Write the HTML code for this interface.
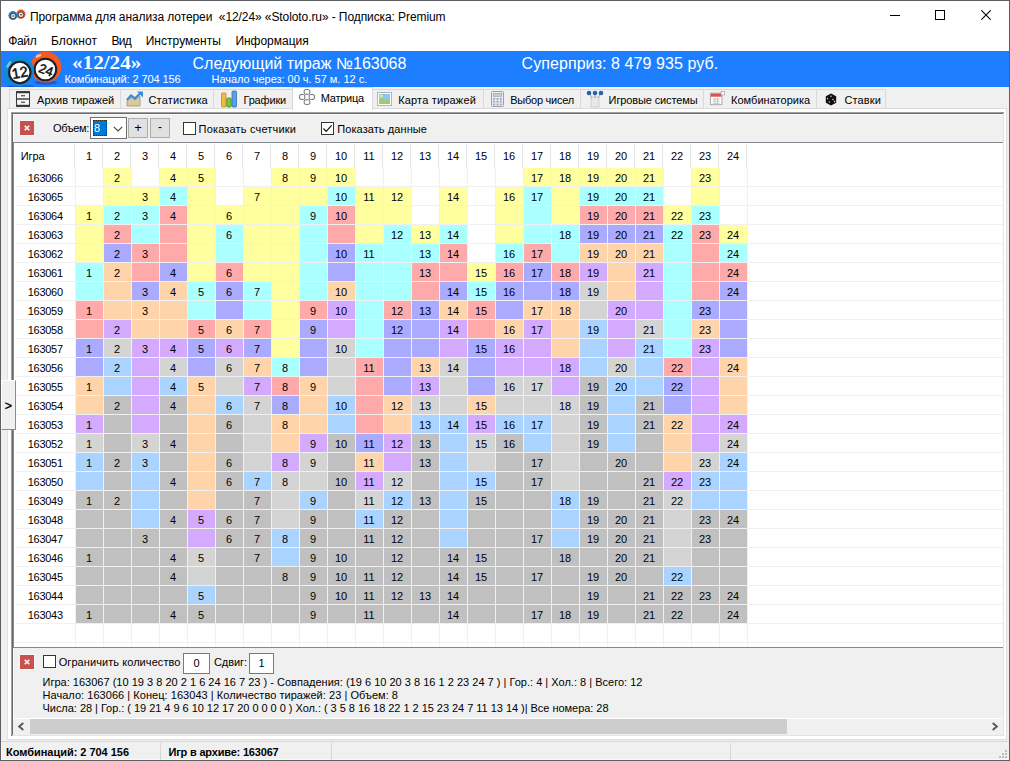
<!DOCTYPE html>
<html><head><meta charset="utf-8"><title>12/24</title>
<style>
html,body{margin:0;padding:0;}
body{width:1010px;height:761px;overflow:hidden;background:#f0f0f0;position:relative;font-family:"Liberation Sans",sans-serif;font-size:11px;color:#000;}
.a{position:absolute;}
.t{position:absolute;white-space:nowrap;line-height:14px;}
.c{position:absolute;width:27px;height:18px;text-align:center;line-height:21px;font-size:11px;overflow:hidden;box-sizing:border-box;padding-right:1px;}
.g{position:absolute;width:60px;height:18px;line-height:21px;font-size:11px;text-align:left;letter-spacing:-0.3px;overflow:hidden;}
.h{position:absolute;text-align:center;width:28px;line-height:14px;font-size:11px;}
.tab{position:absolute;top:89px;height:20px;border:1px solid #d9d9d9;border-bottom:none;background:#f0f0f0;box-sizing:border-box;}
.tt{position:absolute;top:93px;white-space:nowrap;line-height:14px;font-size:12px;}
.m{position:absolute;top:34px;white-space:nowrap;line-height:15px;font-size:12.5px;}
.w{color:#fff;}
</style></head><body>

<div class="a" style="left:0;top:0;width:1010px;height:1px;background:#5c6062"></div>
<div class="a" style="left:0;top:0;width:1px;height:761px;background:#5c6062"></div>
<div class="a" style="left:1009px;top:0;width:1px;height:761px;background:#5c6062"></div>
<div class="a" style="left:0;top:760px;width:1010px;height:1px;background:#5c6062"></div>
<div class="a" style="left:1px;top:1px;width:1008px;height:30px;background:#fff"></div>
<svg class="a" style="left:8px;top:8px" width="18" height="14" viewBox="0 0 18 14"><circle cx="12.9" cy="6.2" r="4.6" fill="#e8522a"/><circle cx="13" cy="6.7" r="2.9" fill="#e4e4e4" stroke="#333" stroke-width="0.9"/><circle cx="4.9" cy="7.6" r="4.5" fill="#1f83cf"/><circle cx="5.2" cy="8" r="2.8" fill="#e4e4e4" stroke="#333" stroke-width="0.9"/><path d="M4 8H6.4M12 6.7H14.2" stroke="#555" stroke-width="1.2"/></svg>
<div class="t" id="title" style="left:30px;top:9.5px;font-size:12px;letter-spacing:-0.088px;line-height:15px;">Программа для анализа лотереи&nbsp; «12/24» «Stoloto.ru» - Подписка: Premium</div>
<div class="a" style="left:890px;top:15px;width:10px;height:1px;background:#000"></div>
<div class="a" style="left:935px;top:10px;width:9px;height:9px;border:1px solid #000;box-sizing:content-box;width:8px;height:8px"></div>
<svg class="a" style="left:981px;top:10px" width="10" height="10" viewBox="0 0 10 10"><path d="M0.3 0.3L9.7 9.7M9.7 0.3L0.3 9.7" stroke="#000" stroke-width="1.1" fill="none"/></svg>
<div class="a" style="left:1px;top:31px;width:1008px;height:20px;background:#fff"></div>
<div class="t" id="menu0" style="left:8.2px;top:33.8px;font-size:12px;letter-spacing:-0.329px;line-height:15px;">Файл</div>
<div class="t" id="menu1" style="left:51px;top:33.8px;font-size:12px;letter-spacing:0.094px;line-height:15px;">Блокнот</div>
<div class="t" id="menu2" style="left:111.6px;top:33.8px;font-size:12px;letter-spacing:-0.773px;line-height:15px;">Вид</div>
<div class="t" id="menu3" style="left:145.7px;top:33.8px;font-size:12px;letter-spacing:0.034px;line-height:15px;">Инструменты</div>
<div class="t" id="menu4" style="left:235.4px;top:33.8px;font-size:12px;letter-spacing:-0.018px;line-height:15px;">Информация</div>
<div class="a" style="left:1px;top:51px;width:1008px;height:36px;background:#1d7fff"></div>
<svg class="a" style="left:1px;top:51px" width="70" height="36" viewBox="1 51 70 36">
<ellipse cx="46" cy="82.5" rx="11.5" ry="2.2" fill="#1a5cd6"/>
<ellipse cx="20.5" cy="86.5" rx="13.5" ry="1.8" fill="#1a5cd6"/>
<circle cx="45.9" cy="67" r="15.4" fill="#f55a23"/>
<ellipse cx="38.5" cy="55.8" rx="3.2" ry="1.3" fill="#fbb9a0" transform="rotate(-25 38.5 55.8)"/>
<circle cx="45.4" cy="69.5" r="10.8" fill="#fff" stroke="#231f20" stroke-width="2.1"/>
<text x="46" y="74.6" font-family="Liberation Sans" font-size="13" text-anchor="middle" fill="#111" stroke="#111" stroke-width="0.5" transform="rotate(20 46 70)">24</text>
<circle cx="18.7" cy="71.3" r="15.3" fill="#0e8ad8"/>
<ellipse cx="8.7" cy="64.6" rx="4" ry="1.3" fill="#7cc4ee" transform="rotate(-58 8.7 64.6)"/>
<circle cx="19.8" cy="72.5" r="10.7" fill="#fff" stroke="#231f20" stroke-width="2.1"/>
<text x="19.8" y="77.6" font-family="Liberation Sans" font-size="14.5" text-anchor="middle" fill="#111" stroke="#111" stroke-width="0.5" transform="rotate(-10 20 72.5)">12</text>
</svg>
<div class="t w" id="big" style="left:72px;top:51.5px;font-size:18px;transform:scaleX(1.1743);transform-origin:0 0;line-height:22px;font-weight:bold;font-family:'Liberation Serif',serif;">«12/24»</div>
<div class="t w" id="comb" style="left:64.5px;top:72px;font-size:11px;letter-spacing:-0.107px;">Комбинаций: 2 704 156</div>
<div class="t w" id="next" style="left:192.5px;top:54px;font-size:16px;letter-spacing:-0.006px;line-height:20px;">Следующий тираж №163068</div>
<div class="t w" id="start" style="left:211.5px;top:72px;font-size:11px;letter-spacing:-0.021px;">Начало через: 00 ч. 57 м. 12 с.</div>
<div class="t w" id="super" style="left:521.5px;top:54px;font-size:16px;letter-spacing:0.077px;line-height:20px;">Суперприз: 8 479 935 руб.</div>
<div class="tab" style="left:9px;width:112px"></div>
<div class="t" id="tab_arch" style="left:37.1px;top:93px;font-size:11px;letter-spacing:0.021px;">Архив тиражей</div>
<div class="tab" style="left:120px;width:94px"></div>
<div class="t" id="tab_stat" style="left:148.5px;top:93px;font-size:11px;letter-spacing:0.162px;">Статистика</div>
<div class="tab" style="left:213px;width:80px"></div>
<div class="t" id="tab_graf" style="left:243.5px;top:93px;font-size:11px;letter-spacing:-0.176px;">Графики</div>
<div class="tab" style="left:372px;width:112px"></div>
<div class="t" id="tab_map" style="left:398.2px;top:93px;font-size:11px;letter-spacing:0.175px;">Карта тиражей</div>
<div class="tab" style="left:483px;width:98px"></div>
<div class="t" id="tab_calc" style="left:510.2px;top:93px;font-size:11px;letter-spacing:-0.236px;">Выбор чисел</div>
<div class="tab" style="left:580px;width:124px"></div>
<div class="t" id="tab_sys" style="left:608.6px;top:93px;font-size:11px;letter-spacing:-0.122px;">Игровые системы</div>
<div class="tab" style="left:703px;width:114px"></div>
<div class="t" id="tab_comb" style="left:731px;top:93px;font-size:11px;letter-spacing:0.029px;">Комбинаторика</div>
<div class="tab" style="left:816px;width:70px"></div>
<div class="t" id="tab_dice" style="left:844.5px;top:93px;font-size:11px;letter-spacing:0.120px;">Ставки</div>
<div class="a" style="left:7px;top:108px;width:1000px;height:632px;background:#fff;border:1px solid #dcdcdc;border-top-color:#dcdcdc;border-left-color:#e2e2e2;box-sizing:border-box"></div>
<div class="a" style="left:292px;top:87px;width:81px;height:23px;background:#fff;border:1px solid #d9d9d9;border-bottom:none;box-sizing:border-box"></div>
<div class="t" id="tab_matrix" style="left:320.7px;top:91px;font-size:11px;letter-spacing:-0.227px;">Матрица</div>
<svg class="a" style="left:16px;top:91px" width="14" height="16" viewBox="0 0 14 16"><rect x="0.5" y="1" width="13" height="14" fill="#f4f4f4" stroke="#3a3a3a" stroke-width="1"/><rect x="0" y="0" width="14" height="2.2" rx="0.8" fill="#3a3a3a"/><rect x="0" y="13.8" width="14" height="2.2" fill="#3a3a3a"/><rect x="0" y="7.3" width="14" height="1.4" fill="#3a3a3a"/><rect x="5" y="4.2" width="4" height="1.1" fill="#3a3a3a"/><rect x="5" y="10.7" width="4" height="1.1" fill="#3a3a3a"/></svg>
<svg class="a" style="left:126px;top:90px" width="18" height="18" viewBox="0 0 18 18"><path d="M1 16V11L5 7L9 10L14 6V16Z" fill="#d9c8a0" stroke="#a89468" stroke-width="0.8"/><path d="M1 10L5 5.5L9 8.5L14 3.5" stroke="#3b8fd8" stroke-width="2.4" fill="none"/><path d="M11 1.5H17V7.5Z" fill="#3b8fd8"/></svg>
<svg class="a" style="left:220px;top:90px" width="18" height="18" viewBox="0 0 18 18"><rect x="1.5" y="3" width="4.5" height="14" rx="1" fill="#f4b942" stroke="#c88a1a" stroke-width="0.8"/><rect x="6.7" y="8" width="4.5" height="9" rx="1" fill="#7cc242" stroke="#4a8e1c" stroke-width="0.8"/><rect x="12" y="1" width="4.5" height="16" rx="1" fill="#5aa2e6" stroke="#2c6db8" stroke-width="0.8"/></svg>
<svg class="a" style="left:299px;top:89px" width="16" height="16" viewBox="0 0 16 16" fill="#fff" stroke="#5a5a5a" stroke-width="0.9"><rect x="5.2" y="0.6" width="5.6" height="4.6" rx="1.3"/><rect x="0.6" y="5.6" width="5.2" height="4.8" rx="1.3"/><rect x="10.2" y="5.6" width="5.2" height="4.8" rx="1.3"/><rect x="5.2" y="10.8" width="5.6" height="4.6" rx="1.3"/></svg>
<svg class="a" style="left:377px;top:91.5px" width="15" height="14" viewBox="0 0 15 14"><rect x="0.5" y="0.5" width="14" height="13" fill="#fff" stroke="#b4b4b4"/><rect x="2" y="2" width="11" height="10" fill="#8ec5ea"/><path d="M2 8L5.5 6.3L9 8.6L13 6.8V12H2Z" fill="#9ccc6a"/><rect x="2.8" y="2.8" width="2.8" height="2.6" fill="#efe58e"/></svg>
<svg class="a" style="left:490.5px;top:91px" width="13" height="16" viewBox="0 0 13 16"><rect x="0.5" y="0.5" width="12" height="15" rx="1" fill="#e8ebf0" stroke="#98a2b2"/><rect x="2.3" y="2.3" width="8.4" height="3" fill="#bcd8b4" stroke="#98a2b2" stroke-width="0.6"/><g fill="#98a2b2"><rect x="2.3" y="7" width="1.8" height="1.8"/><rect x="5.6" y="7" width="1.8" height="1.8"/><rect x="8.9" y="7" width="1.8" height="1.8"/><rect x="2.3" y="9.8" width="1.8" height="1.8"/><rect x="5.6" y="9.8" width="1.8" height="1.8"/><rect x="8.9" y="9.8" width="1.8" height="1.8"/><rect x="2.3" y="12.6" width="1.8" height="1.8"/><rect x="5.6" y="12.6" width="1.8" height="1.8"/><rect x="8.9" y="12.6" width="1.8" height="1.8"/></g></svg>
<svg class="a" style="left:586px;top:90px" width="18" height="18" viewBox="0 0 18 18"><rect x="5" y="7" width="8" height="10" fill="#e8e8e8" stroke="#c0c0c0" stroke-width="0.6"/><path d="M3 3L6 8M9 3V8M15 3L12 8" stroke="#999" stroke-width="0.8"/><circle cx="3" cy="3" r="2.3" fill="#2a5fb4"/><circle cx="9" cy="3" r="2.3" fill="#2a5fb4"/><circle cx="15" cy="3" r="2.3" fill="#2a5fb4"/></svg>
<svg class="a" style="left:710px;top:90.5px" width="15" height="15" viewBox="0 0 17 17"><rect x="0.5" y="2.5" width="13" height="13" fill="#fff" stroke="#a0a0a0"/><rect x="1" y="3" width="12" height="3.5" fill="#e05050"/><path d="M3 9H11M3 11.5H11M3 14H11M5.5 8V15M8.5 8V15" stroke="#b8b8b8" stroke-width="0.8"/><rect x="12.5" y="0.5" width="4" height="4" fill="#fff" stroke="#a0a0a0" stroke-width="0.8"/></svg>
<svg class="a" style="left:825px;top:93px" width="12" height="13" viewBox="0 0 15 16"><path d="M7.5 0.5L14 4V12L7.5 15.5L1 12V4Z" fill="#111"/><g fill="#fff"><circle cx="7.5" cy="3.8" r="0.9"/><circle cx="3.3" cy="7" r="0.8"/><circle cx="5.3" cy="11" r="0.8"/><circle cx="10" cy="8" r="0.8"/><circle cx="12" cy="10.5" r="0.8"/></g></svg>
<div class="a" style="left:11px;top:112px;width:993px;height:624px;background:#f0f0f0;border-left:2px solid #696969;border-top:2px solid #696969;border-right:1px solid #e3e3e3;border-bottom:1px solid #e3e3e3;box-sizing:border-box"></div>
<div class="a" style="left:11px;top:112px;width:992px;height:1px;background:#a0a0a0"></div>
<div class="a" style="left:11px;top:112px;width:1px;height:623px;background:#a0a0a0"></div>
<div class="a" style="left:13px;top:114px;width:990px;height:1px;background:#fafafa"></div>
<div class="a" style="left:13px;top:114px;width:1px;height:28px;background:#fafafa"></div>
<div class="a" style="left:13px;top:142px;width:990px;height:1px;background:#828790"></div>
<div class="a" style="left:13px;top:143px;width:990px;height:504px;background:#fff"></div>
<div class="a" style="left:13px;top:142px;width:1px;height:506px;background:#828790"></div>
<div class="a" style="left:20px;top:121px;width:14px;height:14px;background:#c8504f;outline:1px solid #f8f8f8"></div>
<svg class="a" style="left:24px;top:125px" width="6" height="6" viewBox="0 0 6 6"><path d="M0.7 0.7L5.3 5.3M5.3 0.7L0.7 5.3" stroke="#fff" stroke-width="1.5"/></svg>
<div class="t" id="obem" style="left:52.9px;top:121px;font-size:11px;letter-spacing:-0.318px;">Объем:</div>
<div class="a" style="left:90px;top:117px;width:37px;height:22px;background:#fff;border:1px solid #707070;box-sizing:border-box"></div>
<div class="a" style="left:93px;top:120px;width:14px;height:16px;background:#0078d7;outline:1px dotted #3a2a10;outline-offset:-1px"></div>
<div class="t" style="left:94px;top:121px;font-size:11px;color:#fff">8</div>
<svg class="a" style="left:113px;top:126px" width="10" height="6" viewBox="0 0 10 6"><path d="M0.8 0.8L5 5L9.2 0.8" stroke="#444" stroke-width="1.1" fill="none"/></svg>
<div class="a" style="left:128px;top:118px;width:20px;height:20px;background:#e1e1e1;border:1px solid #adadad;box-sizing:border-box;text-align:center;line-height:17px;font-size:13px">+</div>
<div class="a" style="left:150px;top:118px;width:20px;height:20px;background:#e1e1e1;border:1px solid #adadad;box-sizing:border-box;text-align:center;line-height:17px;font-size:12px">-</div>
<div class="a" style="left:183px;top:122px;width:13px;height:13px;background:#fff;border:1px solid #333;box-sizing:border-box"></div>
<div class="t" id="cb1" style="left:198.6px;top:122px;font-size:11px;letter-spacing:0.173px;">Показать счетчики</div>
<div class="a" style="left:321px;top:122px;width:13px;height:13px;background:#fff;border:1px solid #333;box-sizing:border-box"></div>
<svg class="a" style="left:322px;top:123px" width="11" height="11" viewBox="0 0 11 11"><path d="M1.5 5.5L4.2 8.3L9.6 2.3" stroke="#111" stroke-width="1.2" fill="none"/></svg>
<div class="t" id="cb2" style="left:337.3px;top:122px;font-size:11px;letter-spacing:0.078px;">Показать данные</div>
<div class="a" style="left:15px;top:186px;width:988px;height:1px;background:#f0f0f0"></div>
<div class="a" style="left:15px;top:205px;width:988px;height:1px;background:#f0f0f0"></div>
<div class="a" style="left:15px;top:224px;width:988px;height:1px;background:#f0f0f0"></div>
<div class="a" style="left:15px;top:243px;width:988px;height:1px;background:#f0f0f0"></div>
<div class="a" style="left:15px;top:262px;width:988px;height:1px;background:#f0f0f0"></div>
<div class="a" style="left:15px;top:281px;width:988px;height:1px;background:#f0f0f0"></div>
<div class="a" style="left:15px;top:300px;width:988px;height:1px;background:#f0f0f0"></div>
<div class="a" style="left:15px;top:319px;width:988px;height:1px;background:#f0f0f0"></div>
<div class="a" style="left:15px;top:338px;width:988px;height:1px;background:#f0f0f0"></div>
<div class="a" style="left:15px;top:357px;width:988px;height:1px;background:#f0f0f0"></div>
<div class="a" style="left:15px;top:376px;width:988px;height:1px;background:#f0f0f0"></div>
<div class="a" style="left:15px;top:395px;width:988px;height:1px;background:#f0f0f0"></div>
<div class="a" style="left:15px;top:414px;width:988px;height:1px;background:#f0f0f0"></div>
<div class="a" style="left:15px;top:433px;width:988px;height:1px;background:#f0f0f0"></div>
<div class="a" style="left:15px;top:452px;width:988px;height:1px;background:#f0f0f0"></div>
<div class="a" style="left:15px;top:471px;width:988px;height:1px;background:#f0f0f0"></div>
<div class="a" style="left:15px;top:490px;width:988px;height:1px;background:#f0f0f0"></div>
<div class="a" style="left:15px;top:509px;width:988px;height:1px;background:#f0f0f0"></div>
<div class="a" style="left:15px;top:528px;width:988px;height:1px;background:#f0f0f0"></div>
<div class="a" style="left:15px;top:547px;width:988px;height:1px;background:#f0f0f0"></div>
<div class="a" style="left:15px;top:566px;width:988px;height:1px;background:#f0f0f0"></div>
<div class="a" style="left:15px;top:585px;width:988px;height:1px;background:#f0f0f0"></div>
<div class="a" style="left:15px;top:604px;width:988px;height:1px;background:#f0f0f0"></div>
<div class="a" style="left:15px;top:623px;width:988px;height:1px;background:#f0f0f0"></div>
<div class="a" style="left:15px;top:642px;width:988px;height:1px;background:#f0f0f0"></div>
<div class="a" style="left:75px;top:168px;width:1px;height:478px;background:#f0f0f0"></div>
<div class="a" style="left:103px;top:168px;width:1px;height:478px;background:#f0f0f0"></div>
<div class="a" style="left:131px;top:168px;width:1px;height:478px;background:#f0f0f0"></div>
<div class="a" style="left:159px;top:168px;width:1px;height:478px;background:#f0f0f0"></div>
<div class="a" style="left:187px;top:168px;width:1px;height:478px;background:#f0f0f0"></div>
<div class="a" style="left:215px;top:168px;width:1px;height:478px;background:#f0f0f0"></div>
<div class="a" style="left:243px;top:168px;width:1px;height:478px;background:#f0f0f0"></div>
<div class="a" style="left:271px;top:168px;width:1px;height:478px;background:#f0f0f0"></div>
<div class="a" style="left:299px;top:168px;width:1px;height:478px;background:#f0f0f0"></div>
<div class="a" style="left:327px;top:168px;width:1px;height:478px;background:#f0f0f0"></div>
<div class="a" style="left:355px;top:168px;width:1px;height:478px;background:#f0f0f0"></div>
<div class="a" style="left:383px;top:168px;width:1px;height:478px;background:#f0f0f0"></div>
<div class="a" style="left:411px;top:168px;width:1px;height:478px;background:#f0f0f0"></div>
<div class="a" style="left:439px;top:168px;width:1px;height:478px;background:#f0f0f0"></div>
<div class="a" style="left:467px;top:168px;width:1px;height:478px;background:#f0f0f0"></div>
<div class="a" style="left:495px;top:168px;width:1px;height:478px;background:#f0f0f0"></div>
<div class="a" style="left:523px;top:168px;width:1px;height:478px;background:#f0f0f0"></div>
<div class="a" style="left:551px;top:168px;width:1px;height:478px;background:#f0f0f0"></div>
<div class="a" style="left:579px;top:168px;width:1px;height:478px;background:#f0f0f0"></div>
<div class="a" style="left:607px;top:168px;width:1px;height:478px;background:#f0f0f0"></div>
<div class="a" style="left:635px;top:168px;width:1px;height:478px;background:#f0f0f0"></div>
<div class="a" style="left:663px;top:168px;width:1px;height:478px;background:#f0f0f0"></div>
<div class="a" style="left:691px;top:168px;width:1px;height:478px;background:#f0f0f0"></div>
<div class="a" style="left:719px;top:168px;width:1px;height:478px;background:#f0f0f0"></div>
<div class="a" style="left:747px;top:168px;width:1px;height:478px;background:#f0f0f0"></div>
<div class="a" style="left:74px;top:144px;width:1px;height:24px;background:#e5e5e5"></div>
<div class="a" style="left:102px;top:144px;width:1px;height:24px;background:#e5e5e5"></div>
<div class="a" style="left:130px;top:144px;width:1px;height:24px;background:#e5e5e5"></div>
<div class="a" style="left:158px;top:144px;width:1px;height:24px;background:#e5e5e5"></div>
<div class="a" style="left:186px;top:144px;width:1px;height:24px;background:#e5e5e5"></div>
<div class="a" style="left:214px;top:144px;width:1px;height:24px;background:#e5e5e5"></div>
<div class="a" style="left:242px;top:144px;width:1px;height:24px;background:#e5e5e5"></div>
<div class="a" style="left:270px;top:144px;width:1px;height:24px;background:#e5e5e5"></div>
<div class="a" style="left:298px;top:144px;width:1px;height:24px;background:#e5e5e5"></div>
<div class="a" style="left:326px;top:144px;width:1px;height:24px;background:#e5e5e5"></div>
<div class="a" style="left:354px;top:144px;width:1px;height:24px;background:#e5e5e5"></div>
<div class="a" style="left:382px;top:144px;width:1px;height:24px;background:#e5e5e5"></div>
<div class="a" style="left:410px;top:144px;width:1px;height:24px;background:#e5e5e5"></div>
<div class="a" style="left:438px;top:144px;width:1px;height:24px;background:#e5e5e5"></div>
<div class="a" style="left:466px;top:144px;width:1px;height:24px;background:#e5e5e5"></div>
<div class="a" style="left:494px;top:144px;width:1px;height:24px;background:#e5e5e5"></div>
<div class="a" style="left:522px;top:144px;width:1px;height:24px;background:#e5e5e5"></div>
<div class="a" style="left:550px;top:144px;width:1px;height:24px;background:#e5e5e5"></div>
<div class="a" style="left:578px;top:144px;width:1px;height:24px;background:#e5e5e5"></div>
<div class="a" style="left:606px;top:144px;width:1px;height:24px;background:#e5e5e5"></div>
<div class="a" style="left:634px;top:144px;width:1px;height:24px;background:#e5e5e5"></div>
<div class="a" style="left:662px;top:144px;width:1px;height:24px;background:#e5e5e5"></div>
<div class="a" style="left:690px;top:144px;width:1px;height:24px;background:#e5e5e5"></div>
<div class="a" style="left:718px;top:144px;width:1px;height:24px;background:#e5e5e5"></div>
<div class="a" style="left:746px;top:144px;width:1px;height:24px;background:#e5e5e5"></div>
<div class="t" style="left:20.7px;top:149px;font-size:11px;letter-spacing:-0.1px">Игра</div>
<div class="h" style="left:75px;top:149px">1</div>
<div class="h" style="left:103px;top:149px">2</div>
<div class="h" style="left:131px;top:149px">3</div>
<div class="h" style="left:159px;top:149px">4</div>
<div class="h" style="left:187px;top:149px">5</div>
<div class="h" style="left:215px;top:149px">6</div>
<div class="h" style="left:243px;top:149px">7</div>
<div class="h" style="left:271px;top:149px">8</div>
<div class="h" style="left:299px;top:149px">9</div>
<div class="h" style="left:327px;top:149px">10</div>
<div class="h" style="left:355px;top:149px">11</div>
<div class="h" style="left:383px;top:149px">12</div>
<div class="h" style="left:411px;top:149px">13</div>
<div class="h" style="left:439px;top:149px">14</div>
<div class="h" style="left:467px;top:149px">15</div>
<div class="h" style="left:495px;top:149px">16</div>
<div class="h" style="left:523px;top:149px">17</div>
<div class="h" style="left:551px;top:149px">18</div>
<div class="h" style="left:579px;top:149px">19</div>
<div class="h" style="left:607px;top:149px">20</div>
<div class="h" style="left:635px;top:149px">21</div>
<div class="h" style="left:663px;top:149px">22</div>
<div class="h" style="left:691px;top:149px">23</div>
<div class="h" style="left:719px;top:149px">24</div>
<div class="g" style="left:27.8px;top:168px">163066</div>
<div class="c" style="left:104px;top:168px;background:#ffffa0">2</div>
<div class="c" style="left:160px;top:168px;background:#ffffa0">4</div>
<div class="c" style="left:188px;top:168px;background:#ffffa0">5</div>
<div class="c" style="left:272px;top:168px;background:#ffffa0">8</div>
<div class="c" style="left:300px;top:168px;background:#ffffa0">9</div>
<div class="c" style="left:328px;top:168px;background:#ffffa0">10</div>
<div class="c" style="left:524px;top:168px;background:#ffffa0">17</div>
<div class="c" style="left:552px;top:168px;background:#ffffa0">18</div>
<div class="c" style="left:580px;top:168px;background:#ffffa0">19</div>
<div class="c" style="left:608px;top:168px;background:#ffffa0">20</div>
<div class="c" style="left:636px;top:168px;background:#ffffa0">21</div>
<div class="c" style="left:692px;top:168px;background:#ffffa0">23</div>
<div class="g" style="left:27.8px;top:187px">163065</div>
<div class="c" style="left:104px;top:187px;background:#ffffa0"></div>
<div class="c" style="left:132px;top:187px;background:#ffffa0">3</div>
<div class="c" style="left:160px;top:187px;background:#aaffff">4</div>
<div class="c" style="left:188px;top:187px;background:#ffffa0"></div>
<div class="c" style="left:244px;top:187px;background:#ffffa0">7</div>
<div class="c" style="left:272px;top:187px;background:#ffffa0"></div>
<div class="c" style="left:300px;top:187px;background:#ffffa0"></div>
<div class="c" style="left:328px;top:187px;background:#aaffff">10</div>
<div class="c" style="left:356px;top:187px;background:#ffffa0">11</div>
<div class="c" style="left:384px;top:187px;background:#ffffa0">12</div>
<div class="c" style="left:440px;top:187px;background:#ffffa0">14</div>
<div class="c" style="left:496px;top:187px;background:#ffffa0">16</div>
<div class="c" style="left:524px;top:187px;background:#aaffff">17</div>
<div class="c" style="left:552px;top:187px;background:#ffffa0"></div>
<div class="c" style="left:580px;top:187px;background:#aaffff">19</div>
<div class="c" style="left:608px;top:187px;background:#aaffff">20</div>
<div class="c" style="left:636px;top:187px;background:#aaffff">21</div>
<div class="c" style="left:692px;top:187px;background:#ffffa0"></div>
<div class="g" style="left:27.8px;top:206px">163064</div>
<div class="c" style="left:76px;top:206px;background:#ffffa0">1</div>
<div class="c" style="left:104px;top:206px;background:#aaffff">2</div>
<div class="c" style="left:132px;top:206px;background:#aaffff">3</div>
<div class="c" style="left:160px;top:206px;background:#ffaaaa">4</div>
<div class="c" style="left:188px;top:206px;background:#ffffa0"></div>
<div class="c" style="left:216px;top:206px;background:#ffffa0">6</div>
<div class="c" style="left:244px;top:206px;background:#ffffa0"></div>
<div class="c" style="left:272px;top:206px;background:#ffffa0"></div>
<div class="c" style="left:300px;top:206px;background:#aaffff">9</div>
<div class="c" style="left:328px;top:206px;background:#ffaaaa">10</div>
<div class="c" style="left:356px;top:206px;background:#ffffa0"></div>
<div class="c" style="left:384px;top:206px;background:#ffffa0"></div>
<div class="c" style="left:440px;top:206px;background:#ffffa0"></div>
<div class="c" style="left:496px;top:206px;background:#ffffa0"></div>
<div class="c" style="left:524px;top:206px;background:#aaffff"></div>
<div class="c" style="left:552px;top:206px;background:#ffffa0"></div>
<div class="c" style="left:580px;top:206px;background:#ffaaaa">19</div>
<div class="c" style="left:608px;top:206px;background:#ffaaaa">20</div>
<div class="c" style="left:636px;top:206px;background:#ffaaaa">21</div>
<div class="c" style="left:664px;top:206px;background:#ffffa0">22</div>
<div class="c" style="left:692px;top:206px;background:#aaffff">23</div>
<div class="g" style="left:27.8px;top:225px">163063</div>
<div class="c" style="left:76px;top:225px;background:#ffffa0"></div>
<div class="c" style="left:104px;top:225px;background:#ffaaaa">2</div>
<div class="c" style="left:132px;top:225px;background:#aaffff"></div>
<div class="c" style="left:160px;top:225px;background:#ffaaaa"></div>
<div class="c" style="left:188px;top:225px;background:#ffffa0"></div>
<div class="c" style="left:216px;top:225px;background:#aaffff">6</div>
<div class="c" style="left:244px;top:225px;background:#ffffa0"></div>
<div class="c" style="left:272px;top:225px;background:#ffffa0"></div>
<div class="c" style="left:300px;top:225px;background:#aaffff"></div>
<div class="c" style="left:328px;top:225px;background:#ffaaaa"></div>
<div class="c" style="left:356px;top:225px;background:#ffffa0"></div>
<div class="c" style="left:384px;top:225px;background:#aaffff">12</div>
<div class="c" style="left:412px;top:225px;background:#ffffa0">13</div>
<div class="c" style="left:440px;top:225px;background:#aaffff">14</div>
<div class="c" style="left:496px;top:225px;background:#ffffa0"></div>
<div class="c" style="left:524px;top:225px;background:#aaffff"></div>
<div class="c" style="left:552px;top:225px;background:#aaffff">18</div>
<div class="c" style="left:580px;top:225px;background:#aaaaff">19</div>
<div class="c" style="left:608px;top:225px;background:#aaaaff">20</div>
<div class="c" style="left:636px;top:225px;background:#aaaaff">21</div>
<div class="c" style="left:664px;top:225px;background:#aaffff">22</div>
<div class="c" style="left:692px;top:225px;background:#ffaaaa">23</div>
<div class="c" style="left:720px;top:225px;background:#ffffa0">24</div>
<div class="g" style="left:27.8px;top:244px">163062</div>
<div class="c" style="left:76px;top:244px;background:#ffffa0"></div>
<div class="c" style="left:104px;top:244px;background:#aaaaff">2</div>
<div class="c" style="left:132px;top:244px;background:#ffaaaa">3</div>
<div class="c" style="left:160px;top:244px;background:#ffaaaa"></div>
<div class="c" style="left:188px;top:244px;background:#ffffa0"></div>
<div class="c" style="left:216px;top:244px;background:#aaffff"></div>
<div class="c" style="left:244px;top:244px;background:#ffffa0"></div>
<div class="c" style="left:272px;top:244px;background:#ffffa0"></div>
<div class="c" style="left:300px;top:244px;background:#aaffff"></div>
<div class="c" style="left:328px;top:244px;background:#aaaaff">10</div>
<div class="c" style="left:356px;top:244px;background:#aaffff">11</div>
<div class="c" style="left:384px;top:244px;background:#aaffff"></div>
<div class="c" style="left:412px;top:244px;background:#aaffff">13</div>
<div class="c" style="left:440px;top:244px;background:#ffaaaa">14</div>
<div class="c" style="left:496px;top:244px;background:#aaffff">16</div>
<div class="c" style="left:524px;top:244px;background:#ffaaaa">17</div>
<div class="c" style="left:552px;top:244px;background:#aaffff"></div>
<div class="c" style="left:580px;top:244px;background:#ffd4aa">19</div>
<div class="c" style="left:608px;top:244px;background:#ffd4aa">20</div>
<div class="c" style="left:636px;top:244px;background:#ffd4aa">21</div>
<div class="c" style="left:664px;top:244px;background:#aaffff"></div>
<div class="c" style="left:692px;top:244px;background:#ffaaaa"></div>
<div class="c" style="left:720px;top:244px;background:#aaffff">24</div>
<div class="g" style="left:27.8px;top:263px">163061</div>
<div class="c" style="left:76px;top:263px;background:#aaffff">1</div>
<div class="c" style="left:104px;top:263px;background:#ffd4aa">2</div>
<div class="c" style="left:132px;top:263px;background:#ffaaaa"></div>
<div class="c" style="left:160px;top:263px;background:#aaaaff">4</div>
<div class="c" style="left:188px;top:263px;background:#ffffa0"></div>
<div class="c" style="left:216px;top:263px;background:#ffaaaa">6</div>
<div class="c" style="left:244px;top:263px;background:#ffffa0"></div>
<div class="c" style="left:272px;top:263px;background:#ffffa0"></div>
<div class="c" style="left:300px;top:263px;background:#aaffff"></div>
<div class="c" style="left:328px;top:263px;background:#aaaaff"></div>
<div class="c" style="left:356px;top:263px;background:#aaffff"></div>
<div class="c" style="left:384px;top:263px;background:#aaffff"></div>
<div class="c" style="left:412px;top:263px;background:#ffaaaa">13</div>
<div class="c" style="left:440px;top:263px;background:#ffaaaa"></div>
<div class="c" style="left:468px;top:263px;background:#ffffa0">15</div>
<div class="c" style="left:496px;top:263px;background:#ffaaaa">16</div>
<div class="c" style="left:524px;top:263px;background:#aaaaff">17</div>
<div class="c" style="left:552px;top:263px;background:#ffaaaa">18</div>
<div class="c" style="left:580px;top:263px;background:#d4aaff">19</div>
<div class="c" style="left:608px;top:263px;background:#ffd4aa"></div>
<div class="c" style="left:636px;top:263px;background:#d4aaff">21</div>
<div class="c" style="left:664px;top:263px;background:#aaffff"></div>
<div class="c" style="left:692px;top:263px;background:#ffaaaa"></div>
<div class="c" style="left:720px;top:263px;background:#ffaaaa">24</div>
<div class="g" style="left:27.8px;top:282px">163060</div>
<div class="c" style="left:76px;top:282px;background:#aaffff"></div>
<div class="c" style="left:104px;top:282px;background:#ffd4aa"></div>
<div class="c" style="left:132px;top:282px;background:#aaaaff">3</div>
<div class="c" style="left:160px;top:282px;background:#ffd4aa">4</div>
<div class="c" style="left:188px;top:282px;background:#aaffff">5</div>
<div class="c" style="left:216px;top:282px;background:#aaaaff">6</div>
<div class="c" style="left:244px;top:282px;background:#aaffff">7</div>
<div class="c" style="left:272px;top:282px;background:#ffffa0"></div>
<div class="c" style="left:300px;top:282px;background:#aaffff"></div>
<div class="c" style="left:328px;top:282px;background:#ffd4aa">10</div>
<div class="c" style="left:356px;top:282px;background:#aaffff"></div>
<div class="c" style="left:384px;top:282px;background:#aaffff"></div>
<div class="c" style="left:412px;top:282px;background:#ffaaaa"></div>
<div class="c" style="left:440px;top:282px;background:#aaaaff">14</div>
<div class="c" style="left:468px;top:282px;background:#aaffff">15</div>
<div class="c" style="left:496px;top:282px;background:#aaaaff">16</div>
<div class="c" style="left:524px;top:282px;background:#aaaaff"></div>
<div class="c" style="left:552px;top:282px;background:#aaaaff">18</div>
<div class="c" style="left:580px;top:282px;background:#d4d4d4">19</div>
<div class="c" style="left:608px;top:282px;background:#ffd4aa"></div>
<div class="c" style="left:636px;top:282px;background:#d4aaff"></div>
<div class="c" style="left:664px;top:282px;background:#aaffff"></div>
<div class="c" style="left:692px;top:282px;background:#ffaaaa"></div>
<div class="c" style="left:720px;top:282px;background:#aaaaff">24</div>
<div class="g" style="left:27.8px;top:301px">163059</div>
<div class="c" style="left:76px;top:301px;background:#ffaaaa">1</div>
<div class="c" style="left:104px;top:301px;background:#ffd4aa"></div>
<div class="c" style="left:132px;top:301px;background:#ffd4aa">3</div>
<div class="c" style="left:160px;top:301px;background:#ffd4aa"></div>
<div class="c" style="left:188px;top:301px;background:#aaffff"></div>
<div class="c" style="left:216px;top:301px;background:#aaaaff"></div>
<div class="c" style="left:244px;top:301px;background:#aaffff"></div>
<div class="c" style="left:272px;top:301px;background:#ffffa0"></div>
<div class="c" style="left:300px;top:301px;background:#ffaaaa">9</div>
<div class="c" style="left:328px;top:301px;background:#d4aaff">10</div>
<div class="c" style="left:356px;top:301px;background:#aaffff"></div>
<div class="c" style="left:384px;top:301px;background:#ffaaaa">12</div>
<div class="c" style="left:412px;top:301px;background:#aaaaff">13</div>
<div class="c" style="left:440px;top:301px;background:#ffd4aa">14</div>
<div class="c" style="left:468px;top:301px;background:#ffaaaa">15</div>
<div class="c" style="left:496px;top:301px;background:#aaaaff"></div>
<div class="c" style="left:524px;top:301px;background:#ffd4aa">17</div>
<div class="c" style="left:552px;top:301px;background:#ffd4aa">18</div>
<div class="c" style="left:580px;top:301px;background:#d4d4d4"></div>
<div class="c" style="left:608px;top:301px;background:#d4aaff">20</div>
<div class="c" style="left:636px;top:301px;background:#d4aaff"></div>
<div class="c" style="left:664px;top:301px;background:#aaffff"></div>
<div class="c" style="left:692px;top:301px;background:#aaaaff">23</div>
<div class="c" style="left:720px;top:301px;background:#aaaaff"></div>
<div class="g" style="left:27.8px;top:320px">163058</div>
<div class="c" style="left:76px;top:320px;background:#ffaaaa"></div>
<div class="c" style="left:104px;top:320px;background:#d4aaff">2</div>
<div class="c" style="left:132px;top:320px;background:#ffd4aa"></div>
<div class="c" style="left:160px;top:320px;background:#ffd4aa"></div>
<div class="c" style="left:188px;top:320px;background:#ffaaaa">5</div>
<div class="c" style="left:216px;top:320px;background:#ffd4aa">6</div>
<div class="c" style="left:244px;top:320px;background:#ffaaaa">7</div>
<div class="c" style="left:272px;top:320px;background:#ffffa0"></div>
<div class="c" style="left:300px;top:320px;background:#aaaaff">9</div>
<div class="c" style="left:328px;top:320px;background:#d4aaff"></div>
<div class="c" style="left:356px;top:320px;background:#aaffff"></div>
<div class="c" style="left:384px;top:320px;background:#aaaaff">12</div>
<div class="c" style="left:412px;top:320px;background:#aaaaff"></div>
<div class="c" style="left:440px;top:320px;background:#d4aaff">14</div>
<div class="c" style="left:468px;top:320px;background:#ffaaaa"></div>
<div class="c" style="left:496px;top:320px;background:#ffd4aa">16</div>
<div class="c" style="left:524px;top:320px;background:#d4aaff">17</div>
<div class="c" style="left:552px;top:320px;background:#ffd4aa"></div>
<div class="c" style="left:580px;top:320px;background:#aad4ff">19</div>
<div class="c" style="left:608px;top:320px;background:#d4aaff"></div>
<div class="c" style="left:636px;top:320px;background:#d4d4d4">21</div>
<div class="c" style="left:664px;top:320px;background:#aaffff"></div>
<div class="c" style="left:692px;top:320px;background:#ffd4aa">23</div>
<div class="c" style="left:720px;top:320px;background:#aaaaff"></div>
<div class="g" style="left:27.8px;top:339px">163057</div>
<div class="c" style="left:76px;top:339px;background:#aaaaff">1</div>
<div class="c" style="left:104px;top:339px;background:#d4d4d4">2</div>
<div class="c" style="left:132px;top:339px;background:#d4aaff">3</div>
<div class="c" style="left:160px;top:339px;background:#d4aaff">4</div>
<div class="c" style="left:188px;top:339px;background:#aaaaff">5</div>
<div class="c" style="left:216px;top:339px;background:#d4aaff">6</div>
<div class="c" style="left:244px;top:339px;background:#aaaaff">7</div>
<div class="c" style="left:272px;top:339px;background:#ffffa0"></div>
<div class="c" style="left:300px;top:339px;background:#aaaaff"></div>
<div class="c" style="left:328px;top:339px;background:#d4d4d4">10</div>
<div class="c" style="left:356px;top:339px;background:#aaffff"></div>
<div class="c" style="left:384px;top:339px;background:#aaaaff"></div>
<div class="c" style="left:412px;top:339px;background:#aaaaff"></div>
<div class="c" style="left:440px;top:339px;background:#d4aaff"></div>
<div class="c" style="left:468px;top:339px;background:#aaaaff">15</div>
<div class="c" style="left:496px;top:339px;background:#d4aaff">16</div>
<div class="c" style="left:524px;top:339px;background:#d4aaff"></div>
<div class="c" style="left:552px;top:339px;background:#ffd4aa"></div>
<div class="c" style="left:580px;top:339px;background:#aad4ff"></div>
<div class="c" style="left:608px;top:339px;background:#d4aaff"></div>
<div class="c" style="left:636px;top:339px;background:#aad4ff">21</div>
<div class="c" style="left:664px;top:339px;background:#aaffff"></div>
<div class="c" style="left:692px;top:339px;background:#d4aaff">23</div>
<div class="c" style="left:720px;top:339px;background:#aaaaff"></div>
<div class="g" style="left:27.8px;top:358px">163056</div>
<div class="c" style="left:76px;top:358px;background:#aaaaff"></div>
<div class="c" style="left:104px;top:358px;background:#aad4ff">2</div>
<div class="c" style="left:132px;top:358px;background:#d4aaff"></div>
<div class="c" style="left:160px;top:358px;background:#d4d4d4">4</div>
<div class="c" style="left:188px;top:358px;background:#aaaaff"></div>
<div class="c" style="left:216px;top:358px;background:#d4d4d4">6</div>
<div class="c" style="left:244px;top:358px;background:#ffd4aa">7</div>
<div class="c" style="left:272px;top:358px;background:#aaffff">8</div>
<div class="c" style="left:300px;top:358px;background:#aaaaff"></div>
<div class="c" style="left:328px;top:358px;background:#d4d4d4"></div>
<div class="c" style="left:356px;top:358px;background:#ffaaaa">11</div>
<div class="c" style="left:384px;top:358px;background:#aaaaff"></div>
<div class="c" style="left:412px;top:358px;background:#ffd4aa">13</div>
<div class="c" style="left:440px;top:358px;background:#d4d4d4">14</div>
<div class="c" style="left:468px;top:358px;background:#aaaaff"></div>
<div class="c" style="left:496px;top:358px;background:#d4aaff"></div>
<div class="c" style="left:524px;top:358px;background:#d4aaff"></div>
<div class="c" style="left:552px;top:358px;background:#d4aaff">18</div>
<div class="c" style="left:580px;top:358px;background:#aad4ff"></div>
<div class="c" style="left:608px;top:358px;background:#d4d4d4">20</div>
<div class="c" style="left:636px;top:358px;background:#aad4ff"></div>
<div class="c" style="left:664px;top:358px;background:#ffaaaa">22</div>
<div class="c" style="left:692px;top:358px;background:#d4aaff"></div>
<div class="c" style="left:720px;top:358px;background:#ffd4aa">24</div>
<div class="g" style="left:27.8px;top:377px">163055</div>
<div class="c" style="left:76px;top:377px;background:#ffd4aa">1</div>
<div class="c" style="left:104px;top:377px;background:#aad4ff"></div>
<div class="c" style="left:132px;top:377px;background:#d4aaff"></div>
<div class="c" style="left:160px;top:377px;background:#aad4ff">4</div>
<div class="c" style="left:188px;top:377px;background:#ffd4aa">5</div>
<div class="c" style="left:216px;top:377px;background:#d4d4d4"></div>
<div class="c" style="left:244px;top:377px;background:#d4aaff">7</div>
<div class="c" style="left:272px;top:377px;background:#ffaaaa">8</div>
<div class="c" style="left:300px;top:377px;background:#ffd4aa">9</div>
<div class="c" style="left:328px;top:377px;background:#d4d4d4"></div>
<div class="c" style="left:356px;top:377px;background:#ffaaaa"></div>
<div class="c" style="left:384px;top:377px;background:#aaaaff"></div>
<div class="c" style="left:412px;top:377px;background:#d4aaff">13</div>
<div class="c" style="left:440px;top:377px;background:#d4d4d4"></div>
<div class="c" style="left:468px;top:377px;background:#aaaaff"></div>
<div class="c" style="left:496px;top:377px;background:#d4d4d4">16</div>
<div class="c" style="left:524px;top:377px;background:#d4d4d4">17</div>
<div class="c" style="left:552px;top:377px;background:#d4aaff"></div>
<div class="c" style="left:580px;top:377px;background:#c0c0c0">19</div>
<div class="c" style="left:608px;top:377px;background:#aad4ff">20</div>
<div class="c" style="left:636px;top:377px;background:#aad4ff"></div>
<div class="c" style="left:664px;top:377px;background:#aaaaff">22</div>
<div class="c" style="left:692px;top:377px;background:#d4aaff"></div>
<div class="c" style="left:720px;top:377px;background:#ffd4aa"></div>
<div class="g" style="left:27.8px;top:396px">163054</div>
<div class="c" style="left:76px;top:396px;background:#ffd4aa"></div>
<div class="c" style="left:104px;top:396px;background:#c0c0c0">2</div>
<div class="c" style="left:132px;top:396px;background:#d4aaff"></div>
<div class="c" style="left:160px;top:396px;background:#c0c0c0">4</div>
<div class="c" style="left:188px;top:396px;background:#ffd4aa"></div>
<div class="c" style="left:216px;top:396px;background:#aad4ff">6</div>
<div class="c" style="left:244px;top:396px;background:#d4d4d4">7</div>
<div class="c" style="left:272px;top:396px;background:#aaaaff">8</div>
<div class="c" style="left:300px;top:396px;background:#ffd4aa"></div>
<div class="c" style="left:328px;top:396px;background:#aad4ff">10</div>
<div class="c" style="left:356px;top:396px;background:#ffaaaa"></div>
<div class="c" style="left:384px;top:396px;background:#ffd4aa">12</div>
<div class="c" style="left:412px;top:396px;background:#d4d4d4">13</div>
<div class="c" style="left:440px;top:396px;background:#d4d4d4"></div>
<div class="c" style="left:468px;top:396px;background:#ffd4aa">15</div>
<div class="c" style="left:496px;top:396px;background:#d4d4d4"></div>
<div class="c" style="left:524px;top:396px;background:#d4d4d4"></div>
<div class="c" style="left:552px;top:396px;background:#d4d4d4">18</div>
<div class="c" style="left:580px;top:396px;background:#c0c0c0">19</div>
<div class="c" style="left:608px;top:396px;background:#aad4ff"></div>
<div class="c" style="left:636px;top:396px;background:#c0c0c0">21</div>
<div class="c" style="left:664px;top:396px;background:#aaaaff"></div>
<div class="c" style="left:692px;top:396px;background:#d4aaff"></div>
<div class="c" style="left:720px;top:396px;background:#ffd4aa"></div>
<div class="g" style="left:27.8px;top:415px">163053</div>
<div class="c" style="left:76px;top:415px;background:#d4aaff">1</div>
<div class="c" style="left:104px;top:415px;background:#c0c0c0"></div>
<div class="c" style="left:132px;top:415px;background:#d4aaff"></div>
<div class="c" style="left:160px;top:415px;background:#c0c0c0"></div>
<div class="c" style="left:188px;top:415px;background:#ffd4aa"></div>
<div class="c" style="left:216px;top:415px;background:#c0c0c0">6</div>
<div class="c" style="left:244px;top:415px;background:#d4d4d4"></div>
<div class="c" style="left:272px;top:415px;background:#ffd4aa">8</div>
<div class="c" style="left:300px;top:415px;background:#ffd4aa"></div>
<div class="c" style="left:328px;top:415px;background:#aad4ff"></div>
<div class="c" style="left:356px;top:415px;background:#ffaaaa"></div>
<div class="c" style="left:384px;top:415px;background:#ffd4aa"></div>
<div class="c" style="left:412px;top:415px;background:#aad4ff">13</div>
<div class="c" style="left:440px;top:415px;background:#aad4ff">14</div>
<div class="c" style="left:468px;top:415px;background:#d4aaff">15</div>
<div class="c" style="left:496px;top:415px;background:#aad4ff">16</div>
<div class="c" style="left:524px;top:415px;background:#aad4ff">17</div>
<div class="c" style="left:552px;top:415px;background:#d4d4d4"></div>
<div class="c" style="left:580px;top:415px;background:#c0c0c0">19</div>
<div class="c" style="left:608px;top:415px;background:#aad4ff"></div>
<div class="c" style="left:636px;top:415px;background:#c0c0c0">21</div>
<div class="c" style="left:664px;top:415px;background:#ffd4aa">22</div>
<div class="c" style="left:692px;top:415px;background:#d4aaff"></div>
<div class="c" style="left:720px;top:415px;background:#d4aaff">24</div>
<div class="g" style="left:27.8px;top:434px">163052</div>
<div class="c" style="left:76px;top:434px;background:#d4d4d4">1</div>
<div class="c" style="left:104px;top:434px;background:#c0c0c0"></div>
<div class="c" style="left:132px;top:434px;background:#d4d4d4">3</div>
<div class="c" style="left:160px;top:434px;background:#c0c0c0">4</div>
<div class="c" style="left:188px;top:434px;background:#ffd4aa"></div>
<div class="c" style="left:216px;top:434px;background:#c0c0c0"></div>
<div class="c" style="left:244px;top:434px;background:#d4d4d4"></div>
<div class="c" style="left:272px;top:434px;background:#ffd4aa"></div>
<div class="c" style="left:300px;top:434px;background:#d4aaff">9</div>
<div class="c" style="left:328px;top:434px;background:#c0c0c0">10</div>
<div class="c" style="left:356px;top:434px;background:#aaaaff">11</div>
<div class="c" style="left:384px;top:434px;background:#d4aaff">12</div>
<div class="c" style="left:412px;top:434px;background:#c0c0c0">13</div>
<div class="c" style="left:440px;top:434px;background:#aad4ff"></div>
<div class="c" style="left:468px;top:434px;background:#d4d4d4">15</div>
<div class="c" style="left:496px;top:434px;background:#c0c0c0">16</div>
<div class="c" style="left:524px;top:434px;background:#aad4ff"></div>
<div class="c" style="left:552px;top:434px;background:#d4d4d4"></div>
<div class="c" style="left:580px;top:434px;background:#c0c0c0">19</div>
<div class="c" style="left:608px;top:434px;background:#aad4ff"></div>
<div class="c" style="left:636px;top:434px;background:#c0c0c0"></div>
<div class="c" style="left:664px;top:434px;background:#ffd4aa"></div>
<div class="c" style="left:692px;top:434px;background:#d4aaff"></div>
<div class="c" style="left:720px;top:434px;background:#d4d4d4">24</div>
<div class="g" style="left:27.8px;top:453px">163051</div>
<div class="c" style="left:76px;top:453px;background:#aad4ff">1</div>
<div class="c" style="left:104px;top:453px;background:#c0c0c0">2</div>
<div class="c" style="left:132px;top:453px;background:#aad4ff">3</div>
<div class="c" style="left:160px;top:453px;background:#c0c0c0"></div>
<div class="c" style="left:188px;top:453px;background:#ffd4aa"></div>
<div class="c" style="left:216px;top:453px;background:#c0c0c0">6</div>
<div class="c" style="left:244px;top:453px;background:#d4d4d4"></div>
<div class="c" style="left:272px;top:453px;background:#d4aaff">8</div>
<div class="c" style="left:300px;top:453px;background:#d4d4d4">9</div>
<div class="c" style="left:328px;top:453px;background:#c0c0c0"></div>
<div class="c" style="left:356px;top:453px;background:#ffd4aa">11</div>
<div class="c" style="left:384px;top:453px;background:#d4aaff"></div>
<div class="c" style="left:412px;top:453px;background:#c0c0c0">13</div>
<div class="c" style="left:440px;top:453px;background:#aad4ff"></div>
<div class="c" style="left:468px;top:453px;background:#d4d4d4"></div>
<div class="c" style="left:496px;top:453px;background:#c0c0c0"></div>
<div class="c" style="left:524px;top:453px;background:#c0c0c0">17</div>
<div class="c" style="left:552px;top:453px;background:#d4d4d4"></div>
<div class="c" style="left:580px;top:453px;background:#c0c0c0"></div>
<div class="c" style="left:608px;top:453px;background:#c0c0c0">20</div>
<div class="c" style="left:636px;top:453px;background:#c0c0c0"></div>
<div class="c" style="left:664px;top:453px;background:#ffd4aa"></div>
<div class="c" style="left:692px;top:453px;background:#d4d4d4">23</div>
<div class="c" style="left:720px;top:453px;background:#aad4ff">24</div>
<div class="g" style="left:27.8px;top:472px">163050</div>
<div class="c" style="left:76px;top:472px;background:#aad4ff"></div>
<div class="c" style="left:104px;top:472px;background:#c0c0c0"></div>
<div class="c" style="left:132px;top:472px;background:#aad4ff"></div>
<div class="c" style="left:160px;top:472px;background:#c0c0c0">4</div>
<div class="c" style="left:188px;top:472px;background:#ffd4aa"></div>
<div class="c" style="left:216px;top:472px;background:#c0c0c0">6</div>
<div class="c" style="left:244px;top:472px;background:#aad4ff">7</div>
<div class="c" style="left:272px;top:472px;background:#d4d4d4">8</div>
<div class="c" style="left:300px;top:472px;background:#d4d4d4"></div>
<div class="c" style="left:328px;top:472px;background:#c0c0c0">10</div>
<div class="c" style="left:356px;top:472px;background:#d4aaff">11</div>
<div class="c" style="left:384px;top:472px;background:#d4d4d4">12</div>
<div class="c" style="left:412px;top:472px;background:#c0c0c0"></div>
<div class="c" style="left:440px;top:472px;background:#aad4ff"></div>
<div class="c" style="left:468px;top:472px;background:#aad4ff">15</div>
<div class="c" style="left:496px;top:472px;background:#c0c0c0"></div>
<div class="c" style="left:524px;top:472px;background:#c0c0c0">17</div>
<div class="c" style="left:552px;top:472px;background:#d4d4d4"></div>
<div class="c" style="left:580px;top:472px;background:#c0c0c0"></div>
<div class="c" style="left:608px;top:472px;background:#c0c0c0"></div>
<div class="c" style="left:636px;top:472px;background:#c0c0c0">21</div>
<div class="c" style="left:664px;top:472px;background:#d4aaff">22</div>
<div class="c" style="left:692px;top:472px;background:#aad4ff">23</div>
<div class="c" style="left:720px;top:472px;background:#aad4ff"></div>
<div class="g" style="left:27.8px;top:491px">163049</div>
<div class="c" style="left:76px;top:491px;background:#c0c0c0">1</div>
<div class="c" style="left:104px;top:491px;background:#c0c0c0">2</div>
<div class="c" style="left:132px;top:491px;background:#aad4ff"></div>
<div class="c" style="left:160px;top:491px;background:#c0c0c0"></div>
<div class="c" style="left:188px;top:491px;background:#ffd4aa"></div>
<div class="c" style="left:216px;top:491px;background:#c0c0c0"></div>
<div class="c" style="left:244px;top:491px;background:#c0c0c0">7</div>
<div class="c" style="left:272px;top:491px;background:#d4d4d4"></div>
<div class="c" style="left:300px;top:491px;background:#aad4ff">9</div>
<div class="c" style="left:328px;top:491px;background:#c0c0c0"></div>
<div class="c" style="left:356px;top:491px;background:#d4d4d4">11</div>
<div class="c" style="left:384px;top:491px;background:#aad4ff">12</div>
<div class="c" style="left:412px;top:491px;background:#c0c0c0">13</div>
<div class="c" style="left:440px;top:491px;background:#aad4ff"></div>
<div class="c" style="left:468px;top:491px;background:#c0c0c0">15</div>
<div class="c" style="left:496px;top:491px;background:#c0c0c0"></div>
<div class="c" style="left:524px;top:491px;background:#c0c0c0"></div>
<div class="c" style="left:552px;top:491px;background:#aad4ff">18</div>
<div class="c" style="left:580px;top:491px;background:#c0c0c0">19</div>
<div class="c" style="left:608px;top:491px;background:#c0c0c0"></div>
<div class="c" style="left:636px;top:491px;background:#c0c0c0">21</div>
<div class="c" style="left:664px;top:491px;background:#d4d4d4">22</div>
<div class="c" style="left:692px;top:491px;background:#aad4ff"></div>
<div class="c" style="left:720px;top:491px;background:#aad4ff"></div>
<div class="g" style="left:27.8px;top:510px">163048</div>
<div class="c" style="left:76px;top:510px;background:#c0c0c0"></div>
<div class="c" style="left:104px;top:510px;background:#c0c0c0"></div>
<div class="c" style="left:132px;top:510px;background:#aad4ff"></div>
<div class="c" style="left:160px;top:510px;background:#c0c0c0">4</div>
<div class="c" style="left:188px;top:510px;background:#d4aaff">5</div>
<div class="c" style="left:216px;top:510px;background:#c0c0c0">6</div>
<div class="c" style="left:244px;top:510px;background:#c0c0c0">7</div>
<div class="c" style="left:272px;top:510px;background:#d4d4d4"></div>
<div class="c" style="left:300px;top:510px;background:#c0c0c0">9</div>
<div class="c" style="left:328px;top:510px;background:#c0c0c0"></div>
<div class="c" style="left:356px;top:510px;background:#aad4ff">11</div>
<div class="c" style="left:384px;top:510px;background:#c0c0c0">12</div>
<div class="c" style="left:412px;top:510px;background:#c0c0c0"></div>
<div class="c" style="left:440px;top:510px;background:#aad4ff"></div>
<div class="c" style="left:468px;top:510px;background:#c0c0c0"></div>
<div class="c" style="left:496px;top:510px;background:#c0c0c0"></div>
<div class="c" style="left:524px;top:510px;background:#c0c0c0"></div>
<div class="c" style="left:552px;top:510px;background:#aad4ff"></div>
<div class="c" style="left:580px;top:510px;background:#c0c0c0">19</div>
<div class="c" style="left:608px;top:510px;background:#c0c0c0">20</div>
<div class="c" style="left:636px;top:510px;background:#c0c0c0">21</div>
<div class="c" style="left:664px;top:510px;background:#d4d4d4"></div>
<div class="c" style="left:692px;top:510px;background:#c0c0c0">23</div>
<div class="c" style="left:720px;top:510px;background:#c0c0c0">24</div>
<div class="g" style="left:27.8px;top:529px">163047</div>
<div class="c" style="left:76px;top:529px;background:#c0c0c0"></div>
<div class="c" style="left:104px;top:529px;background:#c0c0c0"></div>
<div class="c" style="left:132px;top:529px;background:#c0c0c0">3</div>
<div class="c" style="left:160px;top:529px;background:#c0c0c0"></div>
<div class="c" style="left:188px;top:529px;background:#d4aaff"></div>
<div class="c" style="left:216px;top:529px;background:#c0c0c0">6</div>
<div class="c" style="left:244px;top:529px;background:#c0c0c0">7</div>
<div class="c" style="left:272px;top:529px;background:#aad4ff">8</div>
<div class="c" style="left:300px;top:529px;background:#c0c0c0">9</div>
<div class="c" style="left:328px;top:529px;background:#c0c0c0"></div>
<div class="c" style="left:356px;top:529px;background:#c0c0c0">11</div>
<div class="c" style="left:384px;top:529px;background:#c0c0c0">12</div>
<div class="c" style="left:412px;top:529px;background:#c0c0c0"></div>
<div class="c" style="left:440px;top:529px;background:#aad4ff"></div>
<div class="c" style="left:468px;top:529px;background:#c0c0c0"></div>
<div class="c" style="left:496px;top:529px;background:#c0c0c0"></div>
<div class="c" style="left:524px;top:529px;background:#c0c0c0">17</div>
<div class="c" style="left:552px;top:529px;background:#aad4ff"></div>
<div class="c" style="left:580px;top:529px;background:#c0c0c0">19</div>
<div class="c" style="left:608px;top:529px;background:#c0c0c0">20</div>
<div class="c" style="left:636px;top:529px;background:#c0c0c0">21</div>
<div class="c" style="left:664px;top:529px;background:#d4d4d4"></div>
<div class="c" style="left:692px;top:529px;background:#c0c0c0">23</div>
<div class="c" style="left:720px;top:529px;background:#c0c0c0"></div>
<div class="g" style="left:27.8px;top:548px">163046</div>
<div class="c" style="left:76px;top:548px;background:#c0c0c0">1</div>
<div class="c" style="left:104px;top:548px;background:#c0c0c0"></div>
<div class="c" style="left:132px;top:548px;background:#c0c0c0"></div>
<div class="c" style="left:160px;top:548px;background:#c0c0c0">4</div>
<div class="c" style="left:188px;top:548px;background:#d4d4d4">5</div>
<div class="c" style="left:216px;top:548px;background:#c0c0c0"></div>
<div class="c" style="left:244px;top:548px;background:#c0c0c0">7</div>
<div class="c" style="left:272px;top:548px;background:#aad4ff"></div>
<div class="c" style="left:300px;top:548px;background:#c0c0c0">9</div>
<div class="c" style="left:328px;top:548px;background:#c0c0c0">10</div>
<div class="c" style="left:356px;top:548px;background:#c0c0c0"></div>
<div class="c" style="left:384px;top:548px;background:#c0c0c0">12</div>
<div class="c" style="left:412px;top:548px;background:#c0c0c0"></div>
<div class="c" style="left:440px;top:548px;background:#c0c0c0">14</div>
<div class="c" style="left:468px;top:548px;background:#c0c0c0">15</div>
<div class="c" style="left:496px;top:548px;background:#c0c0c0"></div>
<div class="c" style="left:524px;top:548px;background:#c0c0c0"></div>
<div class="c" style="left:552px;top:548px;background:#c0c0c0">18</div>
<div class="c" style="left:580px;top:548px;background:#c0c0c0"></div>
<div class="c" style="left:608px;top:548px;background:#c0c0c0">20</div>
<div class="c" style="left:636px;top:548px;background:#c0c0c0">21</div>
<div class="c" style="left:664px;top:548px;background:#d4d4d4"></div>
<div class="c" style="left:692px;top:548px;background:#c0c0c0"></div>
<div class="c" style="left:720px;top:548px;background:#c0c0c0"></div>
<div class="g" style="left:27.8px;top:567px">163045</div>
<div class="c" style="left:76px;top:567px;background:#c0c0c0"></div>
<div class="c" style="left:104px;top:567px;background:#c0c0c0"></div>
<div class="c" style="left:132px;top:567px;background:#c0c0c0"></div>
<div class="c" style="left:160px;top:567px;background:#c0c0c0">4</div>
<div class="c" style="left:188px;top:567px;background:#d4d4d4"></div>
<div class="c" style="left:216px;top:567px;background:#c0c0c0"></div>
<div class="c" style="left:244px;top:567px;background:#c0c0c0"></div>
<div class="c" style="left:272px;top:567px;background:#c0c0c0">8</div>
<div class="c" style="left:300px;top:567px;background:#c0c0c0">9</div>
<div class="c" style="left:328px;top:567px;background:#c0c0c0">10</div>
<div class="c" style="left:356px;top:567px;background:#c0c0c0">11</div>
<div class="c" style="left:384px;top:567px;background:#c0c0c0">12</div>
<div class="c" style="left:412px;top:567px;background:#c0c0c0"></div>
<div class="c" style="left:440px;top:567px;background:#c0c0c0">14</div>
<div class="c" style="left:468px;top:567px;background:#c0c0c0">15</div>
<div class="c" style="left:496px;top:567px;background:#c0c0c0"></div>
<div class="c" style="left:524px;top:567px;background:#c0c0c0">17</div>
<div class="c" style="left:552px;top:567px;background:#c0c0c0"></div>
<div class="c" style="left:580px;top:567px;background:#c0c0c0">19</div>
<div class="c" style="left:608px;top:567px;background:#c0c0c0">20</div>
<div class="c" style="left:636px;top:567px;background:#c0c0c0"></div>
<div class="c" style="left:664px;top:567px;background:#aad4ff">22</div>
<div class="c" style="left:692px;top:567px;background:#c0c0c0"></div>
<div class="c" style="left:720px;top:567px;background:#c0c0c0"></div>
<div class="g" style="left:27.8px;top:586px">163044</div>
<div class="c" style="left:76px;top:586px;background:#c0c0c0"></div>
<div class="c" style="left:104px;top:586px;background:#c0c0c0"></div>
<div class="c" style="left:132px;top:586px;background:#c0c0c0"></div>
<div class="c" style="left:160px;top:586px;background:#c0c0c0"></div>
<div class="c" style="left:188px;top:586px;background:#aad4ff">5</div>
<div class="c" style="left:216px;top:586px;background:#c0c0c0"></div>
<div class="c" style="left:244px;top:586px;background:#c0c0c0"></div>
<div class="c" style="left:272px;top:586px;background:#c0c0c0"></div>
<div class="c" style="left:300px;top:586px;background:#c0c0c0">9</div>
<div class="c" style="left:328px;top:586px;background:#c0c0c0">10</div>
<div class="c" style="left:356px;top:586px;background:#c0c0c0">11</div>
<div class="c" style="left:384px;top:586px;background:#c0c0c0">12</div>
<div class="c" style="left:412px;top:586px;background:#c0c0c0">13</div>
<div class="c" style="left:440px;top:586px;background:#c0c0c0">14</div>
<div class="c" style="left:468px;top:586px;background:#c0c0c0"></div>
<div class="c" style="left:496px;top:586px;background:#c0c0c0"></div>
<div class="c" style="left:524px;top:586px;background:#c0c0c0"></div>
<div class="c" style="left:552px;top:586px;background:#c0c0c0"></div>
<div class="c" style="left:580px;top:586px;background:#c0c0c0">19</div>
<div class="c" style="left:608px;top:586px;background:#c0c0c0"></div>
<div class="c" style="left:636px;top:586px;background:#c0c0c0">21</div>
<div class="c" style="left:664px;top:586px;background:#c0c0c0">22</div>
<div class="c" style="left:692px;top:586px;background:#c0c0c0">23</div>
<div class="c" style="left:720px;top:586px;background:#c0c0c0">24</div>
<div class="g" style="left:27.8px;top:605px">163043</div>
<div class="c" style="left:76px;top:605px;background:#c0c0c0">1</div>
<div class="c" style="left:104px;top:605px;background:#c0c0c0"></div>
<div class="c" style="left:132px;top:605px;background:#c0c0c0"></div>
<div class="c" style="left:160px;top:605px;background:#c0c0c0">4</div>
<div class="c" style="left:188px;top:605px;background:#c0c0c0">5</div>
<div class="c" style="left:216px;top:605px;background:#c0c0c0"></div>
<div class="c" style="left:244px;top:605px;background:#c0c0c0"></div>
<div class="c" style="left:272px;top:605px;background:#c0c0c0"></div>
<div class="c" style="left:300px;top:605px;background:#c0c0c0">9</div>
<div class="c" style="left:328px;top:605px;background:#c0c0c0"></div>
<div class="c" style="left:356px;top:605px;background:#c0c0c0">11</div>
<div class="c" style="left:384px;top:605px;background:#c0c0c0"></div>
<div class="c" style="left:412px;top:605px;background:#c0c0c0"></div>
<div class="c" style="left:440px;top:605px;background:#c0c0c0">14</div>
<div class="c" style="left:468px;top:605px;background:#c0c0c0"></div>
<div class="c" style="left:496px;top:605px;background:#c0c0c0"></div>
<div class="c" style="left:524px;top:605px;background:#c0c0c0">17</div>
<div class="c" style="left:552px;top:605px;background:#c0c0c0">18</div>
<div class="c" style="left:580px;top:605px;background:#c0c0c0">19</div>
<div class="c" style="left:608px;top:605px;background:#c0c0c0"></div>
<div class="c" style="left:636px;top:605px;background:#c0c0c0">21</div>
<div class="c" style="left:664px;top:605px;background:#c0c0c0">22</div>
<div class="c" style="left:692px;top:605px;background:#c0c0c0"></div>
<div class="c" style="left:720px;top:605px;background:#c0c0c0">24</div>
<div class="a" style="left:1px;top:380px;width:15px;height:50px;background:#f0f0f0;border-top:1px solid #fff;border-left:1px solid #fff;border-right:1px solid #8c8c8c;border-bottom:1px solid #8c8c8c;box-sizing:border-box"></div>
<div class="t" style="left:4.7px;top:398.5px;font-size:12.5px;-webkit-text-stroke:0.35px #000">&gt;</div>
<div class="a" style="left:13px;top:647px;width:990px;height:1px;background:#828790"></div>
<div class="a" style="left:13px;top:648px;width:990px;height:87px;background:#f0f0f0"></div>
<div class="a" style="left:13px;top:648px;width:1px;height:87px;background:#fafafa"></div>
<div class="a" style="left:20px;top:655px;width:14px;height:14px;background:#c8504f;outline:1px solid #f8f8f8"></div>
<svg class="a" style="left:24px;top:659px" width="6" height="6" viewBox="0 0 6 6"><path d="M0.7 0.7L5.3 5.3M5.3 0.7L0.7 5.3" stroke="#fff" stroke-width="1.5"/></svg>
<div class="a" style="left:43px;top:655px;width:13px;height:13px;background:#fff;border:1px solid #333;box-sizing:border-box"></div>
<div class="t" id="lim" style="left:58.7px;top:655px;font-size:11px;letter-spacing:0.070px;">Ограничить количество</div>
<div class="a" style="left:183px;top:653px;width:27px;height:21px;background:#fff;border:1px solid #7a7a7a;box-sizing:border-box;text-align:center;line-height:19px;font-size:11px">0</div>
<div class="t" id="sdv" style="left:214px;top:655px;font-size:11px;letter-spacing:-0.070px;">Сдвиг:</div>
<div class="a" style="left:249px;top:653px;width:25px;height:21px;background:#fff;border:1px solid #7a7a7a;box-sizing:border-box;text-align:center;line-height:19px;font-size:11px">1</div>
<div class="t" id="l1" style="left:42.5px;top:675px;font-size:11px;letter-spacing:0.012px;">Игра: 163067 (10 19 3 8 20 2 1 6 24 16 7 23 ) - Совпадения: (19 6 10 20 3 8 16 1 2 23 24 7 ) | Гор.: 4 | Хол.: 8 | Всего: 12</div>
<div class="t" id="l2" style="left:42.5px;top:688px;font-size:11px;letter-spacing:0.043px;">Начало: 163066 | Конец: 163043 | Количество тиражей: 23 | Объем: 8</div>
<div class="t" id="l3" style="left:42.5px;top:701px;font-size:11px;letter-spacing:-0.035px;">Числа: 28 | Гор.: ( 19 21 4 9 6 10 12 17 20 0 0 0 0 ) Хол.: ( 3 5 8 16 18 22 1 2 15 23 24 7 11 13 14 )| Все номера: 28</div>
<div class="a" style="left:13px;top:718px;width:990px;height:1px;background:#fff"></div>
<div class="a" style="left:13px;top:719px;width:990px;height:16px;background:#f0f0f0"></div>
<div class="a" style="left:30px;top:719px;width:757px;height:15px;background:#cdcdcd"></div>
<svg class="a" style="left:17px;top:722px" width="8" height="9" viewBox="0 0 8 9"><path d="M6.3 0.9L2.2 4.5L6.3 8.1" stroke="#5a5a5a" stroke-width="2" fill="none"/></svg>
<svg class="a" style="left:991px;top:722px" width="8" height="9" viewBox="0 0 8 9"><path d="M1.7 0.9L5.8 4.5L1.7 8.1" stroke="#5a5a5a" stroke-width="2" fill="none"/></svg>
<div class="a" style="left:1px;top:741px;width:1008px;height:19px;background:#f0f0f0;border-top:1px solid #d7d7d7;box-sizing:border-box"></div>
<div class="t" id="s1" style="left:6px;top:745px;font-size:11px;letter-spacing:-0.026px;font-weight:bold;">Комбинаций: 2 704 156</div>
<div class="t" id="s2" style="left:168.5px;top:745px;font-size:11px;letter-spacing:-0.191px;font-weight:bold;">Игр в архиве: 163067</div>
<div class="a" style="left:1px;top:742px;width:1px;height:18px;background:#fafafa"></div>
<div class="a" style="left:1px;top:759px;width:1008px;height:1px;background:#fafafa"></div>
<div class="a" style="left:160px;top:743px;width:1px;height:17px;background:#d7d7d7"></div>
<div class="a" style="left:331px;top:743px;width:1px;height:17px;background:#d7d7d7"></div>
<div class="a" style="left:730px;top:743px;width:1px;height:17px;background:#d7d7d7"></div>
<div class="a" style="left:1005px;top:750px;width:2px;height:2px;background:#bdbdbd"></div>
<div class="a" style="left:1002px;top:753px;width:2px;height:2px;background:#bdbdbd"></div>
<div class="a" style="left:1005px;top:753px;width:2px;height:2px;background:#bdbdbd"></div>
<div class="a" style="left:999px;top:756px;width:2px;height:2px;background:#bdbdbd"></div>
<div class="a" style="left:1002px;top:756px;width:2px;height:2px;background:#bdbdbd"></div>
<div class="a" style="left:1005px;top:756px;width:2px;height:2px;background:#bdbdbd"></div>
</body></html>
